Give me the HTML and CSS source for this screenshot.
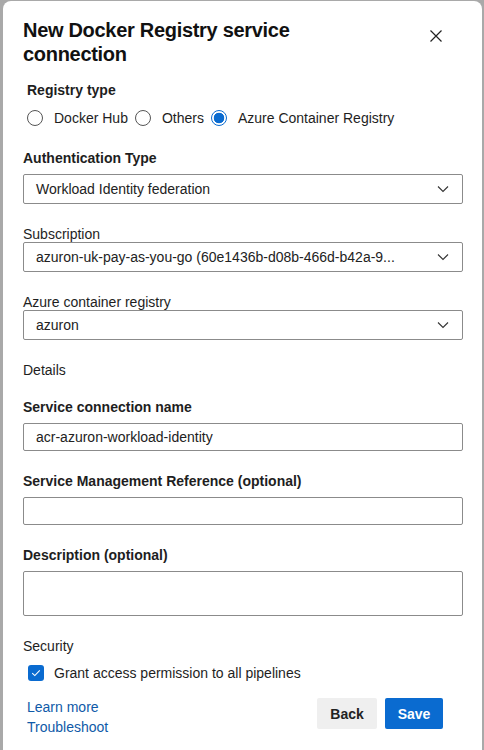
FILE: index.html
```html
<!DOCTYPE html>
<html>
<head>
<meta charset="utf-8">
<link rel="stylesheet" href="styles.css">
</head>
<body>
<div class="backdrop">
  <div class="dialog">
    <div class="header">
      <h1 class="title">New Docker Registry service connection</h1>
      <button class="close" aria-label="Close">
        <svg width="14" height="14" viewBox="0 0 14 14"><path d="M1.5 1.5 L12.5 12.5 M12.5 1.5 L1.5 12.5" stroke="#222" stroke-width="1.2" fill="none"/></svg>
      </button>
    </div>

    <div class="registry">
      <div class="label bold">Registry type</div>
      <div class="radios">
        <label class="radio"><span class="circle"></span>Docker Hub</label>
        <label class="radio"><span class="circle"></span>Others</label>
        <label class="radio"><span class="circle on"></span>Azure Container Registry</label>
      </div>
    </div>

    <div class="field first">
      <div class="label bold">Authentication Type</div>
      <div class="select"><span class="val">Workload Identity federation</span><span class="chev"><svg width="12" height="8" viewBox="0 0 12 8"><path d="M1 1.5 L6 6.5 L11 1.5" stroke="#333" stroke-width="1.1" fill="none"/></svg></span></div>
    </div>

    <div class="field tight">
      <div class="label">Subscription</div>
      <div class="select"><span class="val">azuron-uk-pay-as-you-go (60e1436b-d08b-466d-b42a-9...</span><span class="chev"><svg width="12" height="8" viewBox="0 0 12 8"><path d="M1 1.5 L6 6.5 L11 1.5" stroke="#333" stroke-width="1.1" fill="none"/></svg></span></div>
    </div>

    <div class="field tight">
      <div class="label">Azure container registry</div>
      <div class="select"><span class="val">azuron</span><span class="chev"><svg width="12" height="8" viewBox="0 0 12 8"><path d="M1 1.5 L6 6.5 L11 1.5" stroke="#333" stroke-width="1.1" fill="none"/></svg></span></div>
    </div>

    <div class="section">Details</div>

    <div class="field after-section">
      <div class="label bold">Service connection name</div>
      <div class="input"><span class="val">acr-azuron-workload-identity</span></div>
    </div>

    <div class="field">
      <div class="label bold">Service Management Reference (optional)</div>
      <div class="input"></div>
    </div>

    <div class="field">
      <div class="label bold">Description (optional)</div>
      <div class="textarea"></div>
    </div>

    <div class="section">Security</div>
    <label class="check">
      <span class="box"><svg width="10" height="8" viewBox="0 0 10 8"><path d="M1.2 4.2 L3.8 6.6 L8.8 1.4" stroke="#fff" stroke-width="1.1" fill="none"/></svg></span>
      Grant access permission to all pipelines
    </label>

    <div class="footer">
      <div class="links">
        <a href="#">Learn more</a>
        <a href="#">Troubleshoot</a>
      </div>
      <div class="buttons">
        <button class="btn back">Back</button>
        <button class="btn save">Save</button>
      </div>
    </div>
  </div>
</div>
</body>
</html>
```

FILE: styles.css
```css
* { box-sizing: border-box; }
html, body { margin: 0; padding: 0; }
body {
  width: 484px;
  height: 750px;
  overflow: hidden;
  background: #a9a9a9;
  font-family: "Liberation Sans", Arial, sans-serif;
  color: #1e1e1e;
  font-size: 14px;
}
.backdrop {
  padding: 1px 2px 0 3px;
  height: 750px;
}
.dialog {
  background: #fff;
  border-radius: 8px 8px 0 0;
  height: 749px;
  padding: 0 19px 0 20px;
}
.header {
  display: flex;
  justify-content: space-between;
  align-items: flex-start;
  padding-top: 17px;
}
.title {
  margin: 0;
  font-size: 20px;
  font-weight: bold;
  line-height: 24px;
  width: 290px;
  color: #111;
  letter-spacing: -0.3px;
}
.close {
  border: 0;
  background: none;
  padding: 0;
  margin: 11px 20px 0 0;
  width: 14px;
  height: 14px;
  display: flex;
}
.registry { padding: 0 4px; margin-top: 15px; }
.label { line-height: 18px; }
.bold { font-weight: bold; }
.radios {
  display: flex;
  margin-top: 10px;
}
.radio {
  display: flex;
  align-items: center;
  margin-right: 7px;
  line-height: 18px;
}
.circle {
  width: 16px;
  height: 16px;
  border: 1px solid #555;
  border-radius: 50%;
  margin-right: 11px;
  display: inline-block;
  background: #fff;
}
.circle.on {
  border: 1px solid #0a6bd0;
  background: radial-gradient(circle, #0a6bd0 0 5px, #fff 5.6px);
}
.field { margin-top: 21px; }
.field .label { margin-bottom: 7px; }
.field.first { margin-top: 22px; }
.field.tight { margin-top: 21px; }
.field.tight .label { margin-bottom: -1px; }
.field.after-section { margin-top: 19px; }
.select, .input, .textarea {
  border: 1px solid #8b8b8b;
  border-radius: 2px;
  height: 30px;
  display: flex;
  align-items: center;
  justify-content: space-between;
  padding: 0 11px 0 12px;
  color: #222;
}
.input { height: 28px; }
.textarea { height: 45px; }
.val { line-height: 18px; white-space: nowrap; }
.chev { display: flex; margin-right: 2px; }
.section { margin-top: 21px; line-height: 18px; }
.check {
  display: flex;
  align-items: center;
  margin: 9px 0 0 5px;
  line-height: 18px;
}
.box {
  width: 16px;
  height: 16px;
  background: #0a6bd0;
  border-radius: 3px;
  display: flex;
  align-items: center;
  justify-content: center;
  margin-right: 10px;
}
.footer {
  display: flex;
  justify-content: space-between;
  align-items: flex-start;
  margin-top: 15px;
  padding-left: 4px;
}
.links { display: flex; flex-direction: column; }
.links a {
  color: #0f5aa8;
  text-decoration: none;
  line-height: 20px;
}
.buttons { display: flex; gap: 8px; margin-right: 20px; margin-top: 1px; }
.btn {
  border: 0;
  border-radius: 2px;
  height: 31px;
  font-family: inherit;
  font-size: 14px;
  font-weight: bold;
  padding: 0;
}
.back { background: #efefef; color: #222; width: 60px; }
.save { background: #0a6bd0; color: #fff; width: 58px; }
```
